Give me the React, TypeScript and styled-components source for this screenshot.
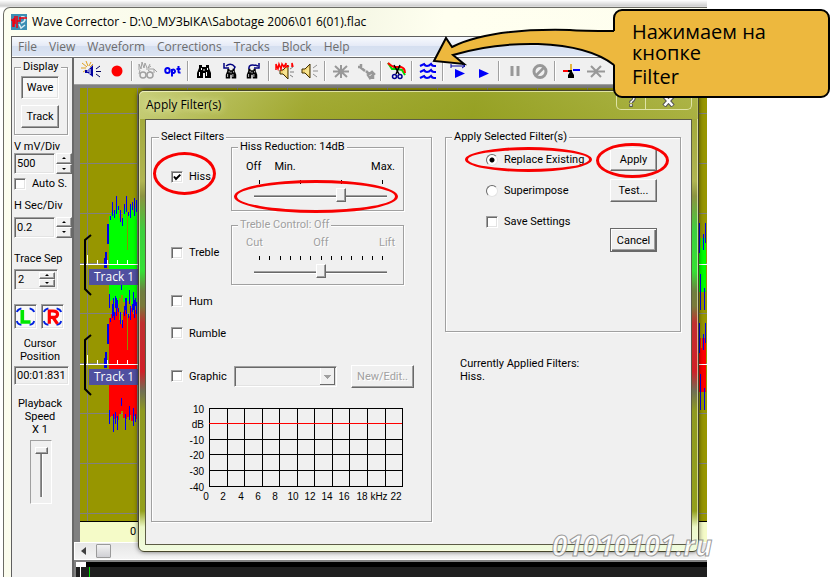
import React from "react";
import styled, { createGlobalStyle, css } from "styled-components";

const UI = `"Roboto", "Liberation Sans", sans-serif`;
const SEGOE = `"Open Sans", "Noto Sans", sans-serif`;
const FACE = "#f0f0f0";
const SHADOW = "#a0a0a0";
const DARK = "#696969";

const GlobalStyle = createGlobalStyle`
  * { box-sizing: border-box; }
  body { margin: 0; background: #fff; overflow: hidden; }
  button, input, select { font: inherit; color: inherit; margin: 0; }
`;

const raised = css`
  border: 1px solid;
  border-color: #fff ${DARK} ${DARK} #fff;
  box-shadow: inset -1px -1px 0 ${SHADOW};
  background: ${FACE};
`;

const sunken = css`
  border: 1px solid;
  border-color: ${SHADOW} #fff #fff ${SHADOW};
  box-shadow: inset 1px 1px 0 ${DARK}, inset -1px -1px 0 #e3e3e3;
`;

/* ---------- window frame ---------- */

const Page = styled.div`
  position: relative;
  min-height: 100vh;
  overflow: hidden;
  font: 11px/13px ${UI};
  color: #000;
`;

const Desktop = styled.div`
  display: flex;
  min-height: 100vh;
  margin-right: 128px;
  padding: 7px 0 0 3px;
  background: linear-gradient(#fff, #cfcfcf 6px, #fff 8px);
`;

const AppWindow = styled.main`
  flex: 1;
  min-width: 0;
  display: flex;
  flex-direction: column;
  padding-left: 7px;
  border: solid #6b6b64;
  border-width: 1px 0 0 1px;
  border-radius: 7px 0 0 0;
  background: linear-gradient(100deg, #fdfef0, #f6f8e6 45%, #fffff0 55%, #fefeee);
`;

const TitleBar = styled.header`
  display: flex;
  align-items: center;
  gap: 5px;
  height: 28px;
  font: 12px/16px ${SEGOE};
  svg { flex: none; }
`;

const Client = styled.div`
  flex: 1;
  display: flex;
  flex-direction: column;
  border: solid #5f5f5f;
  border-width: 1px 0 0 1px;
  background: ${FACE};
`;

const MenuBar = styled.nav`
  display: flex;
  height: 20px;
  background: linear-gradient(#f7f9fd, #e6ebf7 45%, #d5dff0 50%, #dce4f3);
  border-bottom: 1px solid #fff;
`;

const MenuItem = styled.button`
  border: 0;
  padding: 0 6px;
  background: none;
  color: #6d6d6d;
  font: 12px/19px ${SEGOE};
`;

const Body = styled.div`
  flex: 1;
  display: flex;
  border-top: 1px solid #6b6b6b;
`;

/* ---------- left panel ---------- */

const Sidebar = styled.aside`
  width: 62px;
  flex: none;
  padding: 4px 0 0 2px;
  border: solid ${DARK};
  border-width: 0 2px 0 0;
  background: ${FACE};
`;

const GroupBox = styled.fieldset<{ $muted?: boolean }>`
  min-width: 0;
  margin: 0;
  padding: 0;
  border: 1px solid ${SHADOW};
  box-shadow: 1px 1px 0 #fff, inset 1px 1px 0 #fff;
  color: ${(p) => (p.$muted ? "#a0a0a0" : "#000")};
  text-shadow: ${(p) => (p.$muted ? "1px 1px 0 #fff" : "none")};
  legend {
    margin-left: 6px;
    padding: 0 2px;
    line-height: 10px;
    white-space: nowrap;
    background: ${FACE};
  }
`;

const DisplayBox = styled(GroupBox)`
  width: 54px;
  display: flex;
  flex-direction: column;
  padding: 4px 0 6px 6px;
  legend { margin-left: 0; }
`;

const ModeButton = styled.button<{ $on?: boolean }>`
  width: 38px;
  height: 23px;
  padding: 0;
  margin-bottom: ${(p) => (p.$on ? "6px" : "0")};
  ${(p) => (p.$on ? sunken : raised)}
  background: ${(p) => (p.$on ? "#f8f8f8" : FACE)};
`;

const FieldLabel = styled.label<{ $gap: number }>`
  display: block;
  margin-top: ${(p) => p.$gap}px;
  white-space: nowrap;
`;

const SpinField = styled.div`
  display: flex;
  align-items: stretch;
  gap: 1px;
  height: 21px;
  width: 58px;
`;

const TextBox = styled.input`
  flex: 1;
  min-width: 0;
  padding: 0 2px;
  background: ${FACE};
  ${sunken}
`;

const InsetSpin = styled.div`
  display: flex;
  width: 44px;
  height: 21px;
  margin-top: 4px;
  padding: 2px;
  ${sunken}
  input { border: 0; box-shadow: none; padding: 0 1px; }
`;

const SpinButtons = styled.div`
  display: flex;
  flex-direction: column;
  width: 16px;
  button {
    flex: 1;
    padding: 0;
    display: flex;
    align-items: center;
    justify-content: center;
    ${raised}
  }
`;

const Triangle = styled.i<{ $down?: boolean }>`
  border: 2px solid transparent;
  border-width: ${(p) => (p.$down ? "2px 2px 0" : "0 2px 2px")};
  border-color: ${(p) => (p.$down ? "#000 transparent" : "transparent transparent #000")};
`;

const Choice = styled.label`
  display: inline-flex;
  align-items: center;
  gap: 6px;
  white-space: nowrap;
`;

const Check = styled.input`
  appearance: none;
  flex: none;
  width: 12px;
  height: 12px;
  background: #fff;
  ${sunken}
  &:checked {
    background: #fff url("data:image/svg+xml,%3Csvg xmlns='http://www.w3.org/2000/svg' viewBox='0 0 10 10'%3E%3Cpath d='M2 4.5 4 7 8.3 2.6' fill='none' stroke='black' stroke-width='2'/%3E%3C/svg%3E");
  }
`;

const Radio = styled.input`
  appearance: none;
  flex: none;
  width: 12px;
  height: 12px;
  border: 1px solid;
  border-color: ${DARK} #e3e3e3 #e3e3e3 ${DARK};
  border-radius: 50%;
  background: #fff;
  &:checked { background: radial-gradient(circle, #000 2px, #fff 3px); }
`;

const ChannelRow = styled.div`
  display: flex;
  gap: 4px;
  margin-top: 14px;
`;

const ChannelButton = styled.button`
  width: 23px;
  height: 25px;
  padding: 0;
  background: #f8f8f8;
  ${sunken}
  svg { display: block; }
`;

const Caption = styled.label<{ $gap: number }>`
  display: block;
  width: 52px;
  margin-top: ${(p) => p.$gap}px;
  text-align: center;
`;

const CursorBox = styled.input`
  display: block;
  width: 55px;
  height: 19px;
  margin-top: 3px;
  padding: 0 2px;
  background: ${FACE};
  ${sunken}
`;

const SpeedWell = styled.div`
  display: flex;
  justify-content: center;
  width: 22px;
  height: 64px;
  margin: 4px 0 0 16px;
  padding: 6px 0;
  border: 1px solid;
  border-color: ${SHADOW} #fff #fff ${SHADOW};
`;

const VerticalRange = styled.input`
  appearance: none;
  writing-mode: vertical-lr;
  width: 13px;
  height: 50px;
  background: linear-gradient(90deg, transparent 5px, ${SHADOW} 5px, ${DARK} 7px, #fff 7px, #fff 8px, transparent 8px);
  &::-webkit-slider-thumb {
    appearance: none;
    width: 13px;
    height: 7px;
    ${raised}
  }
`;

/* ---------- toolbar and plot ---------- */

const Workspace = styled.section`
  flex: 1;
  min-width: 0;
  display: flex;
  flex-direction: column;
`;

const Toolbar = styled.div`
  display: flex;
  align-items: center;
  height: 27px;
  padding-left: 5px;
  overflow: hidden;
  background: ${FACE};
  border-bottom: 1px solid ${SHADOW};
`;

const ToolButton = styled.button`
  flex: none;
  width: 25px;
  height: 24px;
  padding: 0;
  border: 0;
  background: none;
  display: flex;
  align-items: center;
  justify-content: center;
`;

const Separator = styled.i`
  flex: none;
  width: 6px;
  height: 20px;
  background: linear-gradient(90deg, transparent 2px, ${SHADOW} 2px, ${SHADOW} 3px, #fff 3px, #fff 4px, transparent 4px);
`;

const Plot = styled.div`
  flex: 1;
  display: flex;
  flex-direction: column;
  border: solid #808080;
  border-width: 3px 0 0 6px;
`;

const PlotArea = styled.div`
  flex: 1;
  display: flex;
  justify-content: space-between;
  min-height: 433px;
  border-bottom: 1px solid #000;
  background:
    repeating-linear-gradient(90deg, transparent 0 7px, #808080 7px 8px, transparent 8px 50px),
    repeating-linear-gradient(transparent 0 25px, #808080 25px 26px, transparent 26px 50px),
    #979600;
  svg { display: block; flex: none; }
`;

const TimeStrip = styled.div`
  height: 20px;
  padding-left: 50px;
  background: #f5fbc8;
  line-height: 20px;
`;

const ScrollRow = styled.div`
  display: flex;
  align-items: center;
  gap: 10px;
  height: 18px;
  padding-left: 6px;
  border: 1px solid #fff;
  background: linear-gradient(#e6e6e6, #f4f4f4);
`;

const ScrollArrow = styled.button`
  width: 5px;
  height: 8px;
  padding: 0;
  background: none;
  border: solid transparent;
  border-width: 4px 5px 4px 0;
  border-right-color: #404040;
`;

const ScrollThumb = styled.button`
  width: 15px;
  height: 14px;
  padding: 0;
  border: 1px solid #9a9a9a;
  border-radius: 1px;
  background: linear-gradient(#f2f2f2, #d0d0d4);
`;

const Overview = styled.div`
  height: 17px;
  border: solid #808080;
  border-width: 2px 0 0 2px;
  background:
    linear-gradient(#fff, #fff) 0 0 / 10px 5px no-repeat,
    linear-gradient(#fff, #fff) 4px 5px / 1px 20px no-repeat,
    linear-gradient(#00e000, #00e000) 13px 5px / 1px 20px no-repeat,
    linear-gradient(#000 5px, #1f1f1f 5px);
`;

/* ---------- dialog ---------- */

const Dialog = styled.section`
  position: absolute;
  left: 138px;
  right: 136px;
  top: 90px;
  padding: 0 6px 6px;
  border: 1px solid #45452c;
  border-radius: 6px;
  box-shadow: 0 0 5px rgba(0, 0, 0, 0.55), inset 0 0 0 1px rgba(255, 255, 220, 0.6);
  background: linear-gradient(
    #b3b95c, #a3aa3c 28px, #b0b552 90px, #8c9440 105px, #3ed03e 140px, #35e035 180px,
    #6f7f40 200px, #7a7a3a 215px, #c03030 232px, #d02028 280px, #6f6f55 300px,
    #8f9a20 320px, #93a01c 420px, #ecf8c8 436px, #f0fbe0
  );
`;

const DialogTitle = styled.div`
  display: flex;
  justify-content: space-between;
  align-items: center;
  height: 28px;
  margin: 0 -6px;
  padding: 0 6px 0 7px;
  border-radius: 5px 5px 0 0;
  background: linear-gradient(100deg, rgba(205, 212, 130, 0.8), rgba(158, 166, 40, 0.7) 30%, rgba(146, 158, 28, 0.8) 60%, rgba(172, 180, 66, 0.7));
  box-shadow: inset 0 1px 0 rgba(255, 255, 220, 0.6);
  h2 {
    margin: 0;
    font: 12px/16px ${SEGOE};
    text-shadow: 0 0 6px #e6ebae, 0 0 8px #e6ebae;
  }
`;

const CaptionButtons = styled.div`
  display: flex;
  align-self: flex-start;
  width: 76px;
  height: 19px;
  border: 1px solid #dfe3a6;
  border-top: 0;
  border-radius: 0 0 5px 5px;
  button {
    flex: 1;
    padding: 0;
    border: 0;
    background: none;
  }
  button + button { flex: 1.6; border-left: 1px solid #dfe3a6; }
  svg { display: block; margin: 1px auto 0; }
`;

const DialogBody = styled.div`
  display: grid;
  grid-template-columns: 281px 1fr;
  column-gap: 13px;
  padding: 12px 10px 22px 5px;
  border: 1px solid #5c5c46;
  background: ${FACE};
`;

const FilterGroup = styled(GroupBox)`
  padding: 0 0 13px 19px;
  > legend { margin-left: -12px; }
`;

const FilterRow = styled.div<{ $h: number; $gap?: number }>`
  display: grid;
  grid-template-columns: 60px 173px;
  align-items: center;
  height: ${(p) => p.$h}px;
  margin-top: ${(p) => p.$gap ?? 0}px;
`;

const SliderBox = styled(GroupBox)<{ $h: number }>`
  height: ${(p) => p.$h}px;
  padding: ${(p) => (p.$muted ? 6 : 8)}px 16px 0 14px;
  legend { margin-left: -8px; }
`;

const ScaleLabels = styled.div<{ $even?: boolean }>`
  display: flex;
  justify-content: space-between;
  height: 16px;
  margin: 0 -8px 0 0;
  span:nth-child(2) { margin-right: ${(p) => (p.$even ? "0" : "62px")}; }
`;

const Ticks = styled.div`
  display: flex;
  justify-content: space-between;
  width: 124px;
  margin: 4px 0 0 13px;
  height: 4px;
  i { width: 1px; background: #000; }
`;

const Range = styled.input`
  appearance: none;
  display: block;
  width: 133px;
  height: 14px;
  margin: 4px 0 0 8px;
  background: linear-gradient(transparent 7px, ${SHADOW} 7px, ${SHADOW} 8px, ${DARK} 8px, ${DARK} 9px, #fff 9px, #fff 10px, transparent 10px);
  &::-webkit-slider-thumb {
    appearance: none;
    width: 10px;
    height: 14px;
    ${raised}
  }
`;

const GraphicControls = styled.div`
  display: flex;
  align-items: center;
  justify-content: space-between;
  width: 180px;
  margin-left: 3px;
`;

const ComboWrap = styled.div`
  display: flex;
  width: 103px;
  height: 21px;
  ${sunken}
  background:
    linear-gradient(#a0a0a0, #a0a0a0) 89px 8px / 7px 1px no-repeat,
    linear-gradient(#a0a0a0, #a0a0a0) 90px 9px / 5px 1px no-repeat,
    linear-gradient(#a0a0a0, #a0a0a0) 91px 10px / 3px 1px no-repeat,
    linear-gradient(#a0a0a0, #a0a0a0) 92px 11px / 1px 1px no-repeat,
    linear-gradient(${DARK}, ${DARK}) 99px 1px / 1px 17px no-repeat,
    linear-gradient(${DARK}, ${DARK}) 85px 17px / 15px 1px no-repeat,
    linear-gradient(#fff, #fff) 85px 1px / 1px 16px no-repeat,
    ${FACE};
  select {
    appearance: none;
    flex: 1;
    border: 0;
    background: none;
  }
`;

const PushButton = styled.button<{ $wide?: boolean; $default?: boolean }>`
  width: ${(p) => (p.$wide ? 63 : 47)}px;
  height: ${(p) => (p.$default ? 24 : 23)}px;
  padding: 0;
  ${raised}
  ${(p) => p.$default && css`border-color: ${DARK}; box-shadow: inset 1px 1px 0 #fff, inset -1px -1px 0 ${DARK}, inset -2px -2px 0 ${SHADOW};`}
  &:disabled { color: #a0a0a0; text-shadow: 1px 1px 0 #fff; }
`;

const ApplyColumn = styled.div`
  display: flex;
  flex-direction: column;
  gap: 25px;
`;

const ApplyGroup = styled(GroupBox)`
  height: 200px;
`;

const ApplyGrid = styled.div`
  display: grid;
  grid-template-columns: 1fr 47px;
  padding: 6px 23px 0 40px;
`;

const Options = styled.div`
  display: flex;
  flex-direction: column;
  align-items: flex-start;
  gap: 18px;
  padding-top: 5px;
`;

const Buttons = styled.div`
  display: flex;
  flex-direction: column;
  gap: 8px;
  button:last-child { margin-top: 18px; }
`;

const Applied = styled.p`
  margin: 0 0 0 15px;
`;

/* ---------- annotations ---------- */

const Ring = styled.span<{ $x: number; $y: number; $w: number; $h: number }>`
  position: absolute;
  left: ${(p) => p.$x}px;
  top: ${(p) => p.$y}px;
  width: ${(p) => p.$w}px;
  height: ${(p) => p.$h}px;
  border: 3px solid #f80000;
  border-radius: 50%;
  pointer-events: none;
`;

const Callout = styled.p`
  position: absolute;
  left: 613px;
  top: 9px;
  width: 217px;
  margin: 0;
  padding: 10px 17px 9px;
  border: 2px solid #000;
  border-radius: 9px;
  background: #edb83e;
  font: 20px/21px ${SEGOE};
  span { display: block; margin-top: 3px; }
`;

const Arrow = styled.svg`
  position: absolute;
  left: 430px;
  top: 28px;
`;

const Watermark = styled.div`
  position: absolute;
  left: 552px;
  top: 527px;
  font: italic 700 28px/36px ${SEGOE};
  color: rgba(255, 255, 255, 0.85);
  -webkit-text-stroke: 1px rgba(110, 110, 110, 0.7);
`;

/* ---------- drawings ---------- */

const Icon = ({ children }: { children: React.ReactNode }) => (
  <svg width="22" height="20" viewBox="0 0 22 20" fill="none" aria-hidden="true">{children}</svg>
);

const Binoculars = ({ s = 1, x = 0, y = 0, color = "#000" }) => (
  <g transform={`translate(${x} ${y}) scale(${s})`}>
    <path fill={color} d="M3 1h3v2h4V1h3v3l2 5v5h-6V9H7v5H1V9l2-5z" />
    <path stroke="#fff" d="M3.500 8v4M10.500 8v4M5.500 4v2M11.500 4v2M8 5v2" />
  </g>
);

const Speaker = ({ fill, line }: { fill: string; line: string }) => (
  <g>
    <path d="M3 8h3l5-5v14l-5-5H3z" fill={fill} stroke={line} />
    <path d="M9 7v6M7 9v3" stroke="#fff8b0" />
  </g>
);

const tools: Record<string, React.ReactNode> = {
  "Scan noise": (
    <>
      <path d="M1 2l5 4M5 0l2 5M10 1L8 5M0 7h5M12 3 9 6M2 11l3-2" stroke="#e0a020" />
      <path d="M4 9h3l5-5v12l-5-4H4z" fill="#0000a0" />
      <path d="M9 8v5M6 10h2" stroke="#fff" />
      <path d="M15 8l4-3M15 10.500h5M15 13l4 3" stroke="#000060" />
    </>
  ),
  Record: <circle cx="11" cy="10" r="5.500" fill="#f00" />,
  "Find waves": (
    <>
      <path d="M2 9V3l2 5 1-7 2 6 1-5 2 5M13 3l-2 4 3-2M9 8h8l3 3M17 8v4M3 9l-1 4M11 9l5 4" stroke="#a0a0a0" />
      <circle cx="6" cy="14" r="3" stroke="#a0a0a0" strokeWidth="1.500" />
      <circle cx="13" cy="14" r="3" stroke="#a0a0a0" strokeWidth="1.500" />
    </>
  ),
  Options: (
    <path
      stroke="#0000f0"
      strokeWidth="2"
      d="M5.500 7c-3 0-3 5 0 5s3-5 0-5zM10 15.500V8M10 9c4-2 4 4 0 3M16.500 5v5.500q0 1.500 2 1M14.500 8h4"
    />
  ),
  Find: <Binoculars x={3} y={3} />,
  "Find previous": (
    <>
      <Binoculars x={7} y={7} s={0.75} />
      <path d="M8 5q5-4 9 1l-1 2M6 2v5h5" stroke="#000080" strokeWidth="1.500" />
    </>
  ),
  "Find next": (
    <>
      <Binoculars x={3} y={7} s={0.75} />
      <path d="M6 8q-1-6 9-3M16 2v5h-5" stroke="#000080" strokeWidth="1.500" />
    </>
  ),
  "Play with noise": (
    <>
      <g transform="translate(3 1)"><Speaker fill="#f0d070" line="#403000" /></g>
      <path d="M2 9V3l2 5 1-5 2 5 1-5 2 3 2-4v4l3-1M18 6V2l1 4" stroke="#f00" strokeWidth="1.500" />
      <path d="M16 8l3-2M16 11h4M16 14l3 2" stroke="#808080" />
    </>
  ),
  "Play corrected": (
    <>
      <Speaker fill="#f0d070" line="#403000" />
      <path d="M14 7l4-3M14 10h5M14 13l4 3" stroke="#909090" />
    </>
  ),
  Delete: <path d="M11 4v13M3 10.500h16M5 5l12 11M17 5 5 16" stroke="#989898" strokeWidth="2" />,
  Tools: (
    <path d="M3 6h3V3M5 6l5 4M11 10l3 3M13 14l4-3 2 2-4 4zM18 13v5" stroke="#989898" strokeWidth="2.500" />
  ),
  Cut: (
    <>
      <path d="M2 2l4 6h5l5 1 3 5" stroke="#00d800" strokeWidth="2" />
      <path d="M2 2q3 3 6 4h7q4 1 4 6" stroke="#f00" strokeWidth="2" />
      <path d="M8 4l5 9M14 4l-4 9" stroke="#000" strokeWidth="1.500" />
      <circle cx="8.500" cy="15.500" r="2" stroke="#000090" strokeWidth="1.500" />
      <circle cx="14" cy="15.500" r="2" stroke="#000090" strokeWidth="1.500" />
    </>
  ),
  Filter: (
    <>
      {[4, 10, 16].map((y) => (
        <g key={y}>
          <path d={`M7 ${y - 2}l3 3M14 ${y - 2}l3 3`} stroke="#f0a020" />
          <path d={`M3 ${y + 1}q2-1 4-2 1 2 3 2t4-2q1 2 3 2h2`} stroke="#0000f8" strokeWidth="2" />
        </g>
      ))}
    </>
  ),
  "Play block": (
    <>
      <path d="M7 8v9l10-4.500z" fill="#0000f8" />
      <path d="M3 5h14M3 3v4M14 3l3 2-3 2" stroke="#0000a0" />
    </>
  ),
  Play: <path d="M6 8v9l10-4.500z" fill="#0000f8" />,
  Pause: <path d="M8 5v10M14 5v10" stroke="#989898" strokeWidth="3" />,
  Stop: (
    <>
      <circle cx="11" cy="10.500" r="6" stroke="#989898" strokeWidth="3" />
      <path d="M7 14.500l8-8" stroke="#989898" strokeWidth="2.500" />
    </>
  ),
  Balance: (
    <>
      <path d="M11 3v8" stroke="#e0a000" strokeWidth="1.500" />
      <path d="M3 10h5" stroke="#f00" strokeWidth="2" />
      <path d="M8 10h4" stroke="#000" strokeWidth="2" />
      <path d="M13 9h7" stroke="#00f" strokeWidth="2" />
      <path d="M11 9l3 5v3H8v-3z" fill="#000" />
    </>
  ),
  Clear: <path d="M2 10.500h18M6 5l5 5 5-5M6 16l5-5 5 5" stroke="#989898" strokeWidth="2" />,
};

const toolGroups = [
  ["Scan noise", "Record"],
  ["Find waves", "Options"],
  ["Find", "Find previous", "Find next"],
  ["Play with noise", "Play corrected"],
  ["Delete", "Tools"],
  ["Cut"],
  ["Filter"],
  ["Play block", "Play"],
  ["Pause", "Stop"],
  ["Balance", "Clear"],
];

/* x, body height lost at the top, spike above, body height lost below, spike below */
const slices = [
  [0, 10, 0, 14, 14], [2, 6, 10, 16, 0], [4, 8, 4, 10, 18], [6, 4, 14, 12, 12], [8, 0, 0, 8, 14],
  [10, 12, 8, 20, 0], [12, 16, 4, 26, 8], [14, 4, 6, 12, 0], [16, 2, 12, 10, 16], [18, 6, 0, 14, 0],
  [20, 8, 10, 18, 14], [22, 0, 4, 6, 0], [24, 6, 14, 16, 18], [26, 2, 8, 10, 8],
];

/* One channel of the trace: centre line at y, body colour, tick marks and the track bracket. */
const Channel = ({ y, color, top, low }: { y: number; color: string; top: number; low: number }) => (
  <g shapeRendering="crispEdges">
    {slices.map(([x, cut, up, cutLow, down]) => (
      <g key={x}>
        <rect x={29 + x} y={y - top + cut} width="2" height={top + low - cut - (cutLow >> 1)} fill={color} />
        <rect x={30 + x} y={y - top + cut - up} width="1" height={up + 4} fill="#0000f8" />
        <rect x={29 + x} y={y + low - cutLow} width="1" height={down} fill="#0000f8" />
      </g>
    ))}
    <path d={`M28 ${y - 20}v-20M26 ${y + 4}v-16M25 ${y + 4}v-10`} stroke="#0000e8" strokeWidth="2" />
    <path d={`M47.500 ${y - top + 6}v${top - 20}`} stroke="#8a9000" />
    <path d={`M0 ${y}.500h58M7.500 ${y}v-9M17.500 ${y}v-4M27.500 ${y}v-4M37.500 ${y}v-4M47.500 ${y}v-4`} stroke="#fff" />
    <path d={`M11 ${y - 29}l-6 5v49l6 6`} stroke="#000" strokeWidth="2" fill="none" shapeRendering="auto" />
    <rect x="9" y={y + 5} width="49" height="16" fill="#5050a0" />
    <text x="14" y={y + 17} fill="#fff" fontSize="12" fontFamily="Open Sans">Track 1</text>
  </g>
);

const EdgeChannel = ({ y, color }: { y: number; color: string }) => (
  <g>
    <rect x="1" y={y - 26} width="10" height="54" fill={color} />
    <path d={`M4.500 ${y - 41}v30M8.500 ${y - 30}v16M1.500 ${y - 10}v30M10.500 ${y - 41}v20M5.500 ${y + 10}v36M9.500 ${y + 24}v22`} stroke="#0000f0" />
    <path d={`M6.500 ${y - 30}v14M2.500 ${y + 18}v16`} stroke="#979600" />
    <path d={`M0 ${y}.500h12`} stroke="#fff" />
  </g>
);

const letterFrame = "M2 7q1-3 5-4M21 7q-1-3-5-4M2 17q1 4 5 4M21 17q-1 4-5 4";

const EqChart = () => {
  const xs = Array.from({ length: 12 }, (_, i) => 38 + Math.round(i * 17.55));
  const ys = [8, 23, 39, 54, 70, 86];
  const dbs = ["10", "dB", "-10", "-20", "-30", "-40"];
  const khz = ["0", "2", "4", "6", "8", "10", "12", "14", "16", "18", "kHz", "22"];
  return (
    <svg width="245" height="108" viewBox="0 0 245 108" role="img" aria-label="Graphic equaliser" fontFamily="Liberation Sans, sans-serif" fontSize="10">
      <path
        stroke="#000"
        shapeRendering="crispEdges"
        d={xs.map((x) => `M${x}.5 8V87`).join("") + ys.map((y) => `M38 ${y}.5H232`).join("")}
      />
      <path stroke="#f00" shapeRendering="crispEdges" d="M38 23.500H231" />
      {ys.map((y, i) => <text key={y} x="33" y={y + 5} textAnchor="end">{dbs[i]}</text>)}
      {khz.map((t, i) => <text key={t} x={35 + Math.round(i * 17.3)} y="100" textAnchor="middle">{t}</text>)}
    </svg>
  );
};

const Spin = () => (
  <SpinButtons>
    <button aria-label="Increase"><Triangle /></button>
    <button aria-label="Decrease"><Triangle $down /></button>
  </SpinButtons>
);

export default function App() {
  return (
    <Page>
      <GlobalStyle />
      <Desktop>
        <AppWindow>
          <TitleBar>
            <svg width="16" height="16" viewBox="0 0 16 16" aria-hidden="true">
              <rect width="16" height="16" fill="#3c8fb4" />
              <path d="M10 3q4-1 4 2t-4 4M8 10l2 4 4-3" stroke="#d8ecf4" strokeWidth="1.500" fill="none" />
              <path d="M0 6h2v7M3 4v9M4 2v8M6 2v12M6 7h3V3M8 4h8" stroke="#f00010" strokeWidth="1.500" fill="none" />
            </svg>
            <span>Wave Corrector - D:\0_МУЗЫКА\Sabotage 2006\01 6(01).flac</span>
          </TitleBar>
          <Client>
            <MenuBar>
              {["File", "View", "Waveform", "Corrections", "Tracks", "Block", "Help"].map((m) => (
                <MenuItem key={m}>{m}</MenuItem>
              ))}
            </MenuBar>
            <Body>
              <Sidebar>
                <DisplayBox>
                  <legend>Display</legend>
                  <ModeButton $on>Wave</ModeButton>
                  <ModeButton>Track</ModeButton>
                </DisplayBox>
                <FieldLabel $gap={5} htmlFor="mv">V mV/Div</FieldLabel>
                <SpinField><TextBox id="mv" defaultValue="500" /><Spin /></SpinField>
                <FieldLabel as="div" $gap={3}>
                  <Choice><Check type="checkbox" />Auto S.</Choice>
                </FieldLabel>
                <FieldLabel $gap={6} htmlFor="sec">H Sec/Div</FieldLabel>
                <FieldLabel as="div" $gap={5}>
                  <SpinField><TextBox id="sec" defaultValue="0.2" /><Spin /></SpinField>
                </FieldLabel>
                <FieldLabel $gap={14} htmlFor="sep">Trace Sep</FieldLabel>
                <InsetSpin><TextBox id="sep" defaultValue="2" /><Spin /></InsetSpin>
                <ChannelRow>
                  <ChannelButton aria-label="Left channel">
                    <svg width="21" height="23" viewBox="0 0 23 24" fill="none">
                      <path d={letterFrame} stroke="#0020e0" strokeWidth="2" />
                      <path d="M8 5v13h9" stroke="#00e800" strokeWidth="4" />
                    </svg>
                  </ChannelButton>
                  <ChannelButton aria-label="Right channel">
                    <svg width="21" height="23" viewBox="0 0 23 24" fill="none">
                      <path d={letterFrame} stroke="#0020e0" strokeWidth="2" />
                      <path d="M8 20V6h4q5 0 5 3.500T12 13H8M12 13l5 7" stroke="#f00" strokeWidth="3.500" />
                    </svg>
                  </ChannelButton>
                </ChannelRow>
                <Caption $gap={8} htmlFor="cursor">Cursor<br />Position</Caption>
                <CursorBox id="cursor" readOnly value="00:01:831" />
                <Caption $gap={12} htmlFor="speed">Playback<br />Speed<br />X 1</Caption>
                <SpeedWell>
                  <VerticalRange id="speed" type="range" min="0" max="10" defaultValue="0" />
                </SpeedWell>
              </Sidebar>
              <Workspace>
                <Toolbar role="toolbar">
                  {toolGroups.map((g, i) => (
                    <React.Fragment key={g[0]}>
                      {i > 0 && <Separator />}
                      {g.map((t) => (
                        <ToolButton key={t} aria-label={t}><Icon>{tools[t]}</Icon></ToolButton>
                      ))}
                    </React.Fragment>
                  ))}
                </Toolbar>
                <Plot>
                  <PlotArea>
                    <svg width="58" height="432" viewBox="0 0 58 432">
                      <Channel y={176} color="#00ff00" top={58} low={44} />
                      <Channel y={276} color="#ff0000" top={56} low={60} />
                    </svg>
                    <svg width="12" height="432" viewBox="0 0 12 432">
                      <EdgeChannel y={176} color="#00ff00" />
                      <EdgeChannel y={276} color="#ff0000" />
                    </svg>
                  </PlotArea>
                  <TimeStrip>0</TimeStrip>
                </Plot>
                <ScrollRow>
                  <ScrollArrow aria-label="Scroll left" />
                  <ScrollThumb aria-label="Scroll position" />
                </ScrollRow>
                <Overview />
              </Workspace>
            </Body>
          </Client>
        </AppWindow>
      </Desktop>

      <Dialog role="dialog" aria-label="Apply Filter(s)">
        <DialogTitle>
          <h2>Apply Filter(s)</h2>
          <CaptionButtons>
            <button aria-label="Help">
              <svg width="10" height="13" viewBox="0 0 10 13" fill="none">
                <path d="M2 4q0-3 3-3t3 3q0 2-3 4v1M5 10v3" stroke="#555" strokeWidth="3.500" />
                <path d="M2 4q0-3 3-3t3 3q0 2-3 4v1M5 10v2" stroke="#fff" strokeWidth="1.500" />
              </svg>
            </button>
            <button aria-label="Close">
              <svg width="13" height="12" viewBox="0 0 13 12" fill="none">
                <path d="M2 1l9 10M11 1 2 11" stroke="#555" strokeWidth="4.500" />
                <path d="M2.500 1.500l8 9M10.500 1.500l-8 9" stroke="#fff" strokeWidth="2.500" />
              </svg>
            </button>
          </CaptionButtons>
        </DialogTitle>
        <DialogBody>
          <FilterGroup>
            <legend>Select Filters</legend>
            <FilterRow $h={69}>
              <Choice><Check type="checkbox" defaultChecked />Hiss</Choice>
              <SliderBox $h={69}>
                <legend>Hiss Reduction: 14dB</legend>
                <ScaleLabels><span>Off</span><span>Min.</span><span>Max.</span></ScaleLabels>
                <Ticks>{[0, 1, 2, 3].map((t) => <i key={t} />)}</Ticks>
                <Range type="range" aria-label="Hiss reduction" min="0" max="3" defaultValue="2" />
              </SliderBox>
            </FilterRow>
            <FilterRow $h={65} $gap={9}>
              <Choice><Check type="checkbox" />Treble</Choice>
              <SliderBox $h={65} $muted>
                <legend>Treble Control: Off</legend>
                <ScaleLabels $even><span>Cut</span><span>Off</span><span>Lift</span></ScaleLabels>
                <Ticks>{Array.from({ length: 13 }, (_, t) => <i key={t} />)}</Ticks>
                <Range type="range" aria-label="Treble control" min="-6" max="6" defaultValue="0" disabled />
              </SliderBox>
            </FilterRow>
            <FilterRow $h={32}><Choice><Check type="checkbox" />Hum</Choice></FilterRow>
            <FilterRow $h={32}><Choice><Check type="checkbox" />Rumble</Choice></FilterRow>
            <FilterRow $h={32} $gap={11}>
              <Choice><Check type="checkbox" />Graphic</Choice>
              <GraphicControls>
                <ComboWrap><select aria-label="Graphic preset" disabled /></ComboWrap>
                <PushButton $wide disabled>New/Edit..</PushButton>
              </GraphicControls>
            </FilterRow>
            <FilterRow $h={108} $gap={8}><EqChart /></FilterRow>
          </FilterGroup>
          <ApplyColumn>
            <ApplyGroup>
              <legend>Apply Selected Filter(s)</legend>
              <ApplyGrid>
                <Options>
                  <Choice><Radio type="radio" name="mode" defaultChecked />Replace Existing</Choice>
                  <Choice><Radio type="radio" name="mode" />Superimpose</Choice>
                  <Choice><Check type="checkbox" />Save Settings</Choice>
                </Options>
                <Buttons>
                  <PushButton>Apply</PushButton>
                  <PushButton>Test...</PushButton>
                  <PushButton $default>Cancel</PushButton>
                </Buttons>
              </ApplyGrid>
            </ApplyGroup>
            <Applied>Currently Applied Filters:<br />Hiss.</Applied>
          </ApplyColumn>
        </DialogBody>
        <Ring $x={14} $y={61} $w={63} $h={43} />
        <Ring $x={95} $y={89} $w={164} $h={33} />
        <Ring $x={326} $y={56} $w={127} $h={25} />
        <Ring $x={457} $y={52} $w={73} $h={35} />
      </Dialog>

      <Watermark>01010101.ru</Watermark>
      <Callout>Нажимаем на кнопке<span>Filter</span></Callout>
      <Arrow width="188" height="42" viewBox="0 0 188 42" fill="none">
        <path
          d="M185 3H150Q60 0 22 19L16 10 4 33 34 36 23 27Q62 15 108 16 160 18 185 37z"
          fill="#edb83e"
        />
        <path
          d="M184 3Q150 3 140 2 60 0 22 19L16 10 4 33 34 36 23 27Q62 15 108 16 160 18 184 37"
          stroke="#000"
          strokeWidth="2"
        />
      </Arrow>
    </Page>
  );
}
